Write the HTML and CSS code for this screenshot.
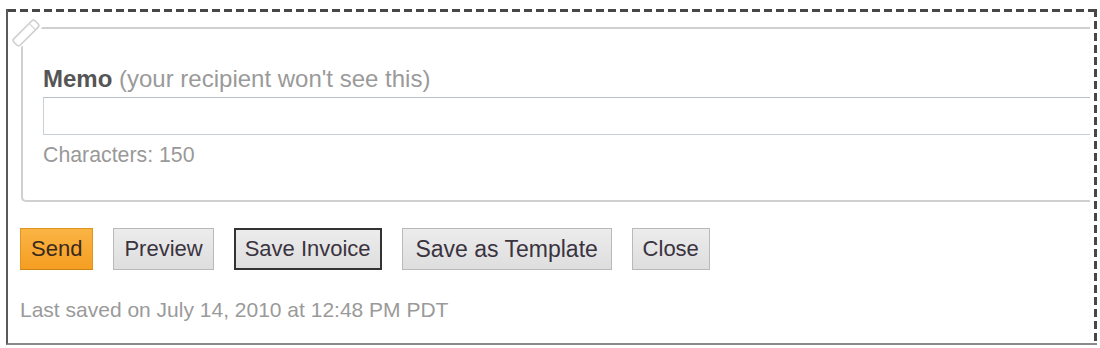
FILE: index.html
```html
<!DOCTYPE html>
<html lang="en">
<head>
<meta charset="utf-8">
<title>Invoice memo</title>
<link rel="stylesheet" href="styles.css">
</head>
<body>
<div class="frame">
  <div class="memo-box">
    <svg class="corner-tab" width="40" height="40" viewBox="0 0 40 40" aria-hidden="true">
      <polygon points="6,8 6,36 36,8" fill="#ffffff"/>
      <g transform="translate(15,18) rotate(-45)">
        <rect x="-15" y="-4.5" width="30" height="9" rx="2.5" fill="#ffffff" stroke="#cfcfcf" stroke-width="1.6"/>
        <line x1="9" y1="-4" x2="9" y2="4" stroke="#d6d6d6" stroke-width="1.2"/>
      </g>
    </svg>
    <label class="memo-label" for="memo"><span class="memo-title">Memo</span> (your recipient won't see this)</label>
    <input class="memo-input" id="memo" type="text">
    <div class="char-count">Characters: 150</div>
  </div>
  <div class="actions">
    <button class="btn btn-primary" type="button">Send</button>
    <button class="btn" type="button">Preview</button>
    <button class="btn btn-focused" type="button">Save Invoice</button>
    <button class="btn btn-wide" type="button">Save as Template</button>
    <button class="btn" type="button">Close</button>
  </div>
  <div class="last-saved">Last saved on July 14, 2010 at 12:48 PM PDT</div>
</div>
</body>
</html>
```
FILE: styles.css
```css
html, body {
  margin: 0;
  padding: 0;
  background: #ffffff;
}

body {
  font-family: "Liberation Sans", Arial, sans-serif;
  padding: 9px 0 0 6px;
}

.frame {
  box-sizing: border-box;
  width: 1091px;
  height: 336px;
  padding: 2px 2px 0 0;
  border-left: 2px solid #5a5a5a;
  border-bottom: 2px solid #8a8a8a;
  background-image:
    repeating-linear-gradient(90deg, #474747 0 8px, transparent 8px 12px),
    repeating-linear-gradient(180deg, #474747 0 8px, transparent 8px 12px);
  background-size: 100% 3px, 3px 100%;
  background-position: left top, right top;
  background-repeat: no-repeat;
  overflow: hidden;
}

.memo-box {
  position: relative;
  box-sizing: border-box;
  width: 1069px;
  margin: 16px 0 0 13px;
  padding: 36px 0 33px 20px;
  border: 2px solid #d0d0d0;
  border-right: none;
  border-bottom-left-radius: 5px;
}

.corner-tab {
  position: absolute;
  left: -12px;
  top: -14px;
}

.memo-label {
  display: block;
  font-size: 24px;
  line-height: 28px;
  color: #9a9a9a;
}

.memo-title {
  font-weight: bold;
  color: #555555;
}

.memo-input {
  display: block;
  box-sizing: border-box;
  width: 100%;
  height: 38px;
  margin: 4px 0 0 0;
  padding: 0 6px;
  border: 1px solid #c8d0d4;
  border-top-color: #b8c0c4;
  border-right: none;
  background: #ffffff;
  font-family: inherit;
  font-size: 20px;
  outline: none;
}

.char-count {
  margin-top: 8px;
  font-size: 21.3px;
  line-height: 24px;
  color: #999999;
}

.actions {
  display: flex;
  gap: 20px;
  margin: 26px 0 0 12px;
}

.btn {
  box-sizing: border-box;
  height: 42px;
  padding: 0 10px;
  border: 1px solid #b9b9b9;
  border-radius: 0;
  background: linear-gradient(#ececec, #dedede);
  font-family: "Liberation Sans", Arial, sans-serif;
  font-size: 22px;
  color: #3a3340;
  cursor: pointer;
}

.btn-wide {
  width: 210px;
  font-size: 23px;
  padding: 0;
}

.btn-primary {
  background: linear-gradient(#fbb444, #f59e22);
  border-color: #dc951f;
  border-bottom-color: #c98418;
  color: #3a2a1a;
}

.btn-focused {
  border: 2px solid #333333;
  padding: 0 9px;
}

.last-saved {
  margin: 28px 0 0 12px;
  font-size: 21px;
  line-height: 24px;
  color: #9a9a9a;
}
```
